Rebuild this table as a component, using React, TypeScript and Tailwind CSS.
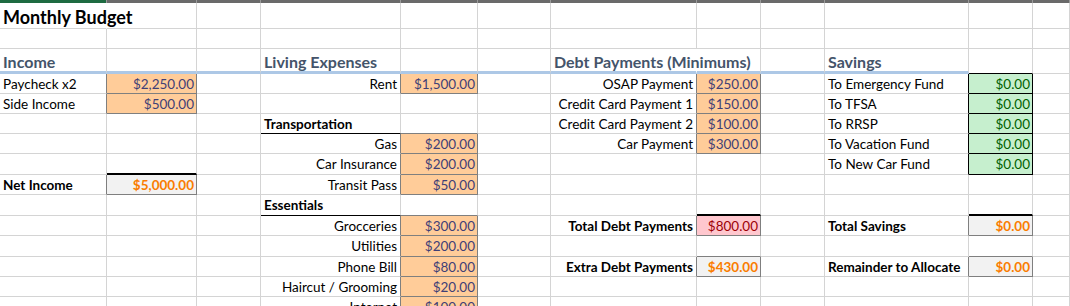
import React from "react";

type Kind = "title" | "head" | "label" | "bold" | "input" | "good" | "calc" | "bad";
type Cell = { t: string; k?: Kind; r?: boolean; spill?: boolean; ul?: boolean; topThick?: boolean };

const WCLS = [
  "w-[107px]",
  "w-[90px]",
  "w-[64px]",
  "w-[140px]",
  "w-[77px]",
  "w-[73px]",
  "w-[146px]",
  "w-[64px]",
  "w-[64px]",
  "w-[144px]",
  "w-[64px]",
  "flex-1",
];

const HCLS = [
  "h-[26px]",
  "h-[20px]",
  "h-[25px]",
  "h-[20px]",
  "h-[20px]",
  "h-[20px]",
  "h-[20px]",
  "h-[21px]",
  "h-[20px]",
  "h-[21px]",
  "h-[20px]",
  "h-[21px]",
  "h-[20px]",
  "h-[20px]",
  "h-[20px]",
];

const A = 0, B = 1, D = 3, E = 4, G = 6, Hc = 7, J = 9, K = 10;

const inp = (t: string): Cell => ({ t, k: "input", r: true });
const lab = (t: string, r = false): Cell => ({ t, k: "label", r });

const ROWS: Record<number, Cell>[] = [
  { [A]: { t: "Monthly Budget", k: "title", spill: true } },
  {},
  {
    [A]: { t: "Income", k: "head" },
    [D]: { t: "Living Expenses", k: "head" },
    [G]: { t: "Debt Payments (Minimums)", k: "head", spill: true },
    [J]: { t: "Savings", k: "head" },
  },
  {
    [A]: lab("Paycheck x2"),
    [B]: inp("$2,250.00"),
    [D]: lab("Rent", true),
    [E]: inp("$1,500.00"),
    [G]: lab("OSAP Payment", true),
    [Hc]: inp("$250.00"),
    [J]: lab("To Emergency Fund"),
    [K]: { t: "$0.00", k: "good", r: true },
  },
  {
    [A]: lab("Side Income"),
    [B]: inp("$500.00"),
    [G]: lab("Credit Card Payment 1", true),
    [Hc]: inp("$150.00"),
    [J]: lab("To TFSA"),
    [K]: { t: "$0.00", k: "good", r: true },
  },
  {
    [D]: { t: "Transportation", k: "bold", ul: true },
    [G]: lab("Credit Card Payment 2", true),
    [Hc]: inp("$100.00"),
    [J]: lab("To RRSP"),
    [K]: { t: "$0.00", k: "good", r: true },
  },
  {
    [D]: lab("Gas", true),
    [E]: inp("$200.00"),
    [G]: lab("Car Payment", true),
    [Hc]: inp("$300.00"),
    [J]: lab("To Vacation Fund"),
    [K]: { t: "$0.00", k: "good", r: true },
  },
  {
    [D]: lab("Car Insurance", true),
    [E]: inp("$200.00"),
    [J]: lab("To New Car Fund"),
    [K]: { t: "$0.00", k: "good", r: true },
  },
  {
    [A]: { t: "Net Income", k: "bold" },
    [B]: { t: "$5,000.00", k: "calc", r: true, topThick: true },
    [D]: lab("Transit Pass", true),
    [E]: inp("$50.00"),
  },
  {
    [D]: { t: "Essentials", k: "bold", ul: true },
  },
  {
    [D]: lab("Grocceries", true),
    [E]: inp("$300.00"),
    [G]: { t: "Total Debt Payments", k: "bold", r: true },
    [Hc]: { t: "$800.00", k: "bad", r: true, topThick: true },
    [J]: { t: "Total Savings", k: "bold" },
    [K]: { t: "$0.00", k: "calc", r: true, topThick: true },
  },
  {
    [D]: lab("Utilities", true),
    [E]: inp("$200.00"),
  },
  {
    [D]: lab("Phone Bill", true),
    [E]: inp("$80.00"),
    [G]: { t: "Extra Debt Payments", k: "bold", r: true },
    [Hc]: { t: "$430.00", k: "calc", r: true },
    [J]: { t: "Remainder to Allocate", k: "bold" },
    [K]: { t: "$0.00", k: "calc", r: true },
  },
  {
    [D]: lab("Haircut / Grooming", true),
    [E]: inp("$20.00"),
  },
  {
    [D]: lab("Internet", true),
    [E]: inp("$100.00"),
  },
];

const NCOLS = 12;

function boxColor(c?: Cell): "gray" | "black" | null {
  if (!c || !c.k) return null;
  if (c.k === "good") return "black";
  if (c.k === "input" || c.k === "calc" || c.k === "bad") return "gray";
  return null;
}

const KIND_CLS: Record<Kind, string> = {
  title: "font-bold text-[18px] text-black",
  head: "font-bold text-[16px] text-[#44546a]",
  label: "text-black",
  bold: "font-bold text-black",
  input: "bg-[#ffcc99] text-[#3f3f76]",
  good: "bg-[#c6efce] text-[#006100]",
  calc: "bg-[#f2f2f2] text-[#fa7d00] font-bold",
  bad: "bg-[#ffc7ce] text-[#9c0006]",
};

function cellClasses(r: number, c: number): string {
  const cell = ROWS[r][c];
  const right = ROWS[r][c + 1];
  const below = ROWS[r + 1]?.[c];
  const parts: string[] = ["border-r", "border-b", "shrink-0", "flex", "overflow-visible", "whitespace-nowrap", WCLS[c]];

  const rb = boxColor(cell) ?? (c + 1 < NCOLS ? boxColor(right) : null);
  if (rb === "black") parts.push("border-r-black");
  else if (rb === "gray") parts.push("border-r-[#7f7f7f]");
  else if (cell?.spill) parts.push("border-r-transparent");
  else parts.push("border-r-[#d4d4d4]");

  if (r === 2 && c <= 9) {
    parts.push("border-b-[3px]", "border-b-[#adc8e6]");
  } else if (cell?.ul) {
    parts.push("border-b-black");
  } else if (below?.topThick) {
    parts.push("border-b-2", "border-b-black");
  } else {
    const bb = boxColor(cell) ?? boxColor(below);
    if (bb === "black") parts.push("border-b-black");
    else if (bb === "gray") parts.push("border-b-[#7f7f7f]");
    else parts.push("border-b-[#d4d4d4]");
  }

  if (r === 2) parts.push("items-end", "pb-[1px]");
  else parts.push("items-center", "pt-[2px]");

  if (cell) {
    if (cell.k) parts.push(KIND_CLS[cell.k]);
    if (cell.r) parts.push("justify-end", boxColor(cell) ? "pr-[2px]" : "pr-[3px]");
    else parts.push("pl-[3px]");
  }
  return parts.join(" ");
}

const TOP_CLS = [
  "bg-[#1e6b41]",
  "bg-[#6a6a6a]",
  "bg-[#6a6a6a]",
  "bg-[#6a6a6a]",
  "bg-[#6a6a6a]",
  "bg-[#6a6a6a]",
  "bg-[#6a6a6a]",
  "bg-[#6a6a6a]",
  "bg-[#6a6a6a]",
  "bg-[#6a6a6a]",
  "bg-[#6a6a6a]",
  "bg-[#6a6a6a]",
];

export default function App() {
  return (
    <div
      className="w-[1070px] h-[306px] overflow-hidden bg-white text-[13.5px] leading-none text-black"
      style={{ fontFamily: '"Lato", "Noto Sans", sans-serif' }}
    >
      <div className="flex h-[3px]">
        {TOP_CLS.map((bg, c) => (
          <div key={c} className={`${WCLS[c]} ${bg} shrink-0 border-r border-r-[#9a9a9a]`} />
        ))}
      </div>
      {ROWS.map((row, r) => (
        <div key={r} className={`flex ${HCLS[r]}`}>
          {Array.from({ length: NCOLS }).map((_, c) => (
            <div key={c} className={cellClasses(r, c)}>
              {row[c]?.t ?? ""}
            </div>
          ))}
        </div>
      ))}
    </div>
  );
}
